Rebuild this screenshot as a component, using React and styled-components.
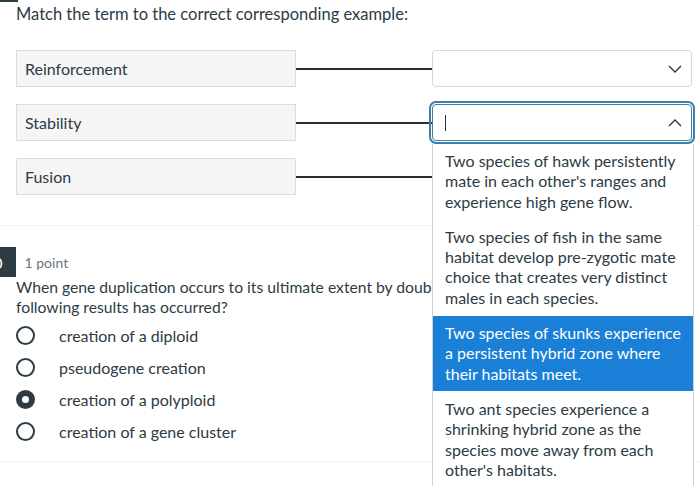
import React from 'react';
import styled, { createGlobalStyle } from 'styled-components';

const GlobalStyle = createGlobalStyle`
  body {
    margin: 0;
    background: #ffffff;
    font-family: Lato, "Open Sans", sans-serif;
    color: #2d3b45;
  }
`;

const Page = styled.div`
  position: relative;
  width: 700px;
  height: 486px;
  overflow: hidden;
  background: #ffffff;
`;

const TopStub = styled.div`
  width: 18px;
  height: 2px;
  background: #2d3b45;
`;

const Title = styled.div`
  margin-top: 2px;
  padding-left: 16px;
  font-size: 16.5px;
  line-height: 20px;
`;

const MatchList = styled.div`
  display: flex;
  flex-direction: column;
  gap: 17px;
  margin-top: 26px;
  padding-left: 16px;
`;

const MatchRow = styled.div`
  display: grid;
  grid-template-columns: 280px 136px 260px;
  align-items: center;
  height: 37px;
`;

const Term = styled.div`
  box-sizing: border-box;
  height: 37px;
  display: flex;
  align-items: center;
  padding-left: 8px;
  background: #f5f5f5;
  border: 1px solid #dcdcdc;
  font-size: 16px;
`;

const Connector = styled.div`
  height: 2px;
  background: #2d2d2d;
`;

const SelectWrap = styled.div`
  position: relative;
  height: 37px;
`;

const SelectBox = styled.div`
  box-sizing: border-box;
  height: 37px;
  display: flex;
  align-items: center;
  justify-content: space-between;
  padding: 0 9px 0 12px;
  background: #ffffff;
  border: 1px solid ${p => (p.$open ? '#3a7fa6' : '#d8d8d8')};
  border-radius: 4px;
  outline: ${p => (p.$open ? '2px solid #3a7fa6' : 'none')};
  outline-offset: 1px;
`;

const Caret = styled.span`
  width: 1px;
  height: 16px;
  background: #333;
`;

const DropList = styled.div`
  position: absolute;
  top: calc(100% + 3px);
  left: 0;
  width: 262px;
  z-index: 5;
  background: #ffffff;
  border-left: 1px solid #d0d0d0;
  border-right: 1px solid #d0d0d0;
  box-sizing: border-box;
`;

const DropItem = styled.div`
  padding: 7px 4px 7px 12px;
  margin-bottom: 1px;
  font-size: 16px;
  line-height: 20.3px;
  background: ${p => (p.$active ? '#1a7fd6' : 'transparent')};
  color: ${p => (p.$active ? '#ffffff' : '#2d3b45')};
`;

const Separator = styled.div`
  height: 1px;
  background: #f1f1f1;
  margin-top: ${p => p.$top}px;
`;

const QuestionHeader = styled.div`
  display: flex;
  align-items: center;
  gap: 9px;
  margin-top: 21px;
`;

const Badge = styled.div`
  height: 30px;
  display: flex;
  align-items: center;
  margin-left: -22px;
  padding: 0 13px 0 6px;
  background: #2d3b45;
  color: #ffffff;
  font-size: 16px;
`;

const Points = styled.span`
  font-size: 14px;
  color: #6b7780;
`;

const QuestionText = styled.div`
  padding-left: 16px;
  font-size: 15.7px;
  line-height: 20px;
  white-space: nowrap;
`;

const Options = styled.div`
  display: flex;
  flex-direction: column;
  margin-top: 2px;
  padding-left: 16px;
`;

const Option = styled.label`
  display: flex;
  align-items: center;
  height: 32px;
  font-size: 16px;
`;

const Radio = styled.span`
  box-sizing: border-box;
  width: 19px;
  height: 19px;
  border-radius: 50%;
  border: ${p => (p.$checked ? '6px' : '2px')} solid #2d3b45;
  background: #ffffff;
  margin-right: 24px;
`;

const Chevron = ({ up }) => (
  <svg width="14" height="8" viewBox="0 0 14 8" fill="none">
    <polyline
      points={up ? '1,7 7,1 13,7' : '1,1 7,7 13,1'}
      stroke="#333"
      strokeWidth="1.3"
    />
  </svg>
);

const terms = ['Reinforcement', 'Stability', 'Fusion'];

const examples = [
  "Two species of hawk persistently mate in each other's ranges and experience high gene flow.",
  'Two species of fish in the same habitat develop pre-zygotic mate choice that creates very distinct males in each species.',
  'Two species of skunks experience a persistent hybrid zone where their habitats meet.',
  "Two ant species experience a shrinking hybrid zone as the species move away from each other's habitats.",
];

const options = [
  { label: 'creation of a diploid', checked: false },
  { label: 'pseudogene creation', checked: false },
  { label: 'creation of a polyploid', checked: true },
  { label: 'creation of a gene cluster', checked: false },
];

export default function App() {
  return (
    <>
      <GlobalStyle />
      <Page>
        <TopStub />
        <Title>Match the term to the correct corresponding example:</Title>
        <MatchList>
          {terms.map((t, i) => (
            <MatchRow key={t}>
              <Term>{t}</Term>
              <Connector />
              <SelectWrap>
                <SelectBox $open={i === 1}>
                  {i === 1 ? <Caret /> : <span />}
                  <Chevron up={i === 1} />
                </SelectBox>
                {i === 1 && (
                  <DropList>
                    {examples.map((e, j) => (
                      <DropItem key={j} $active={j === 2}>{e}</DropItem>
                    ))}
                  </DropList>
                )}
              </SelectWrap>
            </MatchRow>
          ))}
        </MatchList>
        <Separator $top={30} />
        <QuestionHeader>
          <Badge>10</Badge>
          <Points>1 point</Points>
        </QuestionHeader>
        <QuestionText>
          When gene duplication occurs to its ultimate extent by doubling the entire genome, which of the
          <br />
          following results has occurred?
        </QuestionText>
        <Options>
          {options.map(o => (
            <Option key={o.label}>
              <Radio $checked={o.checked} />
              {o.label}
            </Option>
          ))}
        </Options>
        <Separator $top={14} />
      </Page>
    </>
  );
}
